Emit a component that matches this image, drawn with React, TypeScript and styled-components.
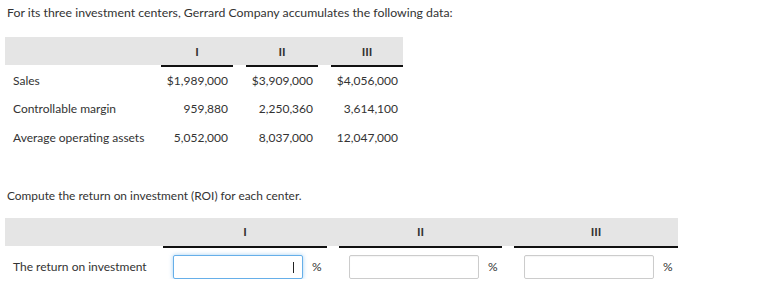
import styled, { createGlobalStyle } from 'styled-components';

const GlobalStyle = createGlobalStyle`
  body {
    margin: 0;
    background: #fff;
    font-family: Lato, "Open Sans", sans-serif;
    color: #333;
  }
`;

const centers = ['I', 'II', 'III'];

const rows = [
  { label: 'Sales', values: ['$1,989,000', '$3,909,000', '$4,056,000'] },
  { label: 'Controllable margin', values: ['959,880', '2,250,360', '3,614,100'] },
  { label: 'Average operating assets', values: ['5,052,000', '8,037,000', '12,047,000'] },
];

export default function App() {
  return (
    <Page>
      <GlobalStyle />
      <Prompt $size={12.3}>
        For its three investment centers, Gerrard Company accumulates the following data:
      </Prompt>

      <DataTable>
        <HeadRow $cols="143px 72px 72px 72px" $gap={13}>
          <HeadCell $plain />
          {centers.map((c) => (
            <HeadCell key={c}>{c}</HeadCell>
          ))}
        </HeadRow>
        {rows.map((row) => (
          <DataRow key={row.label}>
            <Label>{row.label}</Label>
            {row.values.map((v) => (
              <Amount key={v}>{v}</Amount>
            ))}
          </DataRow>
        ))}
      </DataTable>

      <Prompt $top={37} $size={11.9}>
        Compute the return on investment (ROI) for each center.
      </Prompt>

      <AnswerTable>
        <HeadRow $cols="146px 164px 163px 164px" $gap={12}>
          <HeadCell $plain />
          {centers.map((c) => (
            <HeadCell key={c}>{c}</HeadCell>
          ))}
        </HeadRow>
        <AnswerRow>
          <Label>The return on investment</Label>
          {centers.map((c, i) => (
            <AnswerCell key={c}>
              <InputWrap>
                <Field $focused={i === 0} aria-label={`ROI ${c}`} />
                {i === 0 && <Caret />}
              </InputWrap>
              <Unit>%</Unit>
            </AnswerCell>
          ))}
        </AnswerRow>
      </AnswerTable>
    </Page>
  );
}

const Page = styled.div`
  padding: 6px 5px 0;
  width: 776px;
  box-sizing: border-box;
`;

const Prompt = styled.p<{ $top?: number; $size: number }>`
  margin: ${({ $top }) => $top ?? 0}px 0 0 2px;
  font-size: ${({ $size }) => $size}px;
  line-height: 13px;
  color: #333;
`;

const DataTable = styled.div`
  margin-top: 18px;
  width: 398px;
`;

const HeadRow = styled.div<{ $cols: string; $gap: number }>`
  display: grid;
  grid-template-columns: ${({ $cols }) => $cols};
  column-gap: ${({ $gap }) => $gap}px;
  height: 28px;
  background: #e5e5e5;
`;

const HeadCell = styled.div<{ $plain?: boolean }>`
  display: flex;
  align-items: center;
  justify-content: center;
  font-size: 12px;
  font-weight: 700;
  color: #333;
  box-shadow: ${({ $plain }) => ($plain ? 'none' : '0 2px 0 0 #111')};
`;

const DataRow = styled.div`
  display: grid;
  grid-template-columns: 143px 72px 72px 72px;
  column-gap: 13px;
  height: 28.5px;
  align-items: center;
  &:nth-of-type(2) {
    margin-top: 1px;
  }
`;

const Label = styled.div`
  padding-left: 8px;
  font-size: 12px;
  color: #333;
  white-space: nowrap;
`;

const Amount = styled.div`
  text-align: right;
  padding-right: 5px;
  font-size: 12px;
  color: #333;
`;

const AnswerTable = styled.div`
  margin-top: 16px;
  width: 673px;
`;

const AnswerRow = styled.div`
  display: grid;
  grid-template-columns: 146px 164px 163px 164px;
  column-gap: 12px;
  align-items: center;
  margin-top: 9px;
`;

const AnswerCell = styled.div`
  display: flex;
  align-items: center;
  padding-left: 10px;
`;

const InputWrap = styled.div`
  position: relative;
  display: flex;
`;

const Field = styled.input<{ $focused?: boolean }>`
  width: 130px;
  height: 24px;
  box-sizing: border-box;
  border: 1px solid ${({ $focused }) => ($focused ? '#66afe9' : '#cccccc')};
  border-radius: 2px;
  box-shadow: ${({ $focused }) =>
    $focused ? '0 0 4px rgba(102, 175, 233, 0.6)' : 'inset 0 1px 1px rgba(0,0,0,0.04)'};
  outline: none;
  background: #fff;
  text-align: right;
  font-family: inherit;
  font-size: 12px;
  padding: 0 8px;
`;

const Caret = styled.span`
  position: absolute;
  right: 9px;
  top: 7px;
  width: 1px;
  height: 11px;
  background: #222;
`;

const Unit = styled.span`
  margin-left: 9px;
  font-size: 12px;
  color: #333;
`;
